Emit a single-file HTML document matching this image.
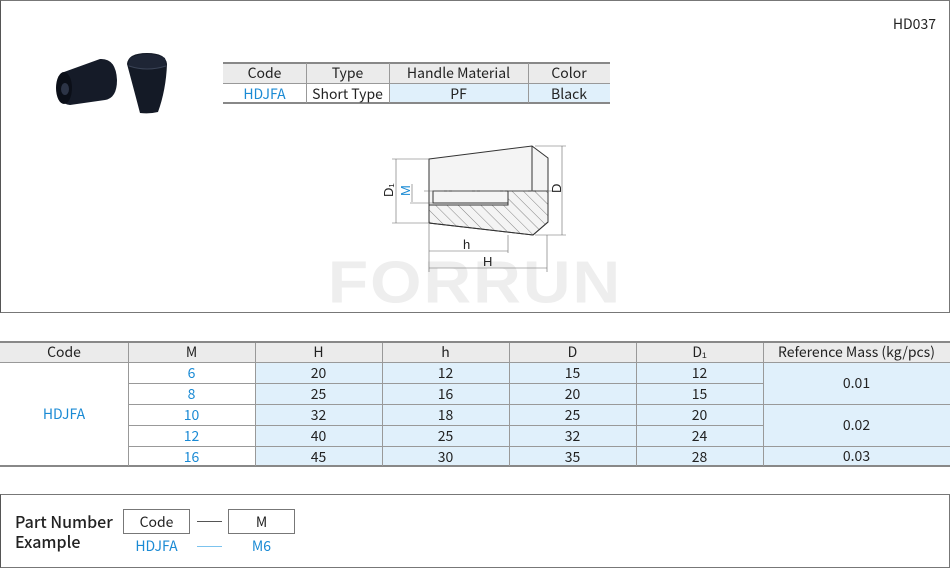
<!DOCTYPE html>
<html><head><meta charset="utf-8"><style>
*{margin:0;padding:0;box-sizing:border-box}
body{width:950px;height:570px;background:#fff;font-family:"Noto Sans CJK JP","Liberation Sans",sans-serif;color:#222;position:relative;overflow:hidden}
.box{position:absolute;border:1px solid #777}
.c{position:absolute;display:flex;align-items:center;justify-content:center;font-size:14px;line-height:1}
.b{color:#1a8ad4}
.hd{background:#ebebeb}
.bl{background:#e0f0fb}
</style></head><body>
<div class="box" style="left:0;top:0;width:950px;height:313px;border-left:1px solid #555"></div>
<div style="position:absolute;right:14px;top:14px;font-size:14px">HD037</div>
<!-- knobs -->
<svg style="position:absolute;left:50px;top:50px" width="130" height="70">
<path d="M14 22 L50 9 Q66 8 67 30 Q67 48 55 50 L20 55 Q8 54 8 38 Q8 26 14 22Z" fill="#151b28"/>
<ellipse cx="14" cy="38" rx="8" ry="16" fill="#0b0f18"/>
<ellipse cx="15" cy="39" rx="4" ry="6" fill="#2c3446"/>
<path d="M77 14 Q78 3 97 3 Q116 3 117 14 Q116 40 108 62 Q100 64 90 63 Q84 40 77 14Z" fill="#141a26"/>
<path d="M80 8 Q97 0 115 8 L116 16 Q97 22 78 16Z" fill="#1e2535"/>
<path d="M79 16 Q97 22 116 16" stroke="#3a4356" fill="none"/>
</svg>
<!-- small table -->
<div style="position:absolute;left:223px;top:62px;width:387px;height:42px;border-top:2px solid #888;border-bottom:2px solid #888"></div>
<div class="hd" style="position:absolute;left:223px;top:64px;width:387px;height:19px"></div>
<div class="bl" style="position:absolute;left:389px;top:84px;width:221px;height:18px"></div>
<div style="position:absolute;left:223px;top:83px;width:387px;border-top:1px solid #999"></div>
<div style="position:absolute;left:306px;top:63px;height:40px;border-left:1px solid #999"></div>
<div style="position:absolute;left:389px;top:63px;height:40px;border-left:1px solid #999"></div>
<div style="position:absolute;left:528px;top:63px;height:40px;border-left:1px solid #999"></div>
<div class="c" style="left:223px;top:63px;width:83px;height:20px">Code</div>
<div class="c" style="left:306px;top:63px;width:83px;height:20px">Type</div>
<div class="c" style="left:389px;top:63px;width:139px;height:20px">Handle Material</div>
<div class="c" style="left:528px;top:63px;width:82px;height:20px">Color</div>
<div class="c b" style="left:223px;top:84px;width:83px;height:19px">HDJFA</div>
<div class="c" style="left:306px;top:84px;width:83px;height:19px">Short Type</div>
<div class="c" style="left:389px;top:84px;width:139px;height:19px">PF</div>
<div class="c" style="left:528px;top:84px;width:82px;height:19px">Black</div>
<!-- watermark -->
<div style="position:absolute;left:318px;top:250px;width:314px;height:64px;font:bold 66px 'Liberation Sans',sans-serif;color:#eeeeee;letter-spacing:2px;line-height:64px;text-align:center;transform:scaleY(0.9)">FORRUN</div>
<!-- drawing -->
<svg style="position:absolute;left:370px;top:140px" width="220" height="140" font-family="Liberation Sans" font-size="13">
<defs><pattern id="h" width="8" height="8" patternUnits="userSpaceOnUse" patternTransform="rotate(-45)"><line x1="0" y1="0" x2="0" y2="8" stroke="#555" stroke-width="0.7"/></pattern></defs>
<path d="M59 19 L162 6 L178 18 L178 82 L163 95 L59 83 Z" fill="#f4f4f4" stroke="#333"/>
<path d="M59 65 L138 65 L138 51 L178 51 L178 82 L163 95 L59 83 Z" fill="url(#h)" stroke="#333"/>
<path d="M63 51 L138 51 L138 63 L63 63 Z" fill="#f4f4f4" stroke="#333"/>
<line x1="162" y1="6" x2="162" y2="51" stroke="#333"/>
<g stroke="#666" stroke-width="0.6" fill="none">
<line x1="22" y1="19" x2="59" y2="19"/><line x1="22" y1="83" x2="59" y2="83"/>
<line x1="26" y1="19" x2="26" y2="83"/>
<line x1="40" y1="63" x2="63" y2="63"/><line x1="42" y1="44" x2="42" y2="62"/>
<line x1="54" y1="51" x2="182" y2="51" stroke-dasharray="20 3 2 3"/>
<line x1="165" y1="6" x2="196" y2="6"/><line x1="165" y1="95" x2="196" y2="95"/>
<line x1="192" y1="6" x2="192" y2="95"/>
<line x1="59" y1="84" x2="59" y2="132"/><line x1="138" y1="95" x2="138" y2="113"/><line x1="177" y1="95" x2="177" y2="132"/>
<line x1="59" y1="111" x2="138" y2="111"/><line x1="59" y1="128" x2="177" y2="128"/>
</g>
<text x="93" y="109" fill="#222">h</text>
<text x="113" y="126" fill="#222">H</text>
<text x="23" y="57" transform="rotate(-90 23 57)" fill="#222">D₁</text>
<text x="40" y="56" transform="rotate(-90 40 56)" fill="#1a8ad4">M</text>
<text x="191" y="53" transform="rotate(-90 191 53)" fill="#222">D</text>
</svg>
<!-- main table -->
<div style="position:absolute;left:0;top:341px;width:950px;height:126px;border-top:2px solid #888;border-bottom:2px solid #888"></div>
<div class="hd" style="position:absolute;left:0;top:343px;width:950px;height:19px"></div>
<div class="bl" style="position:absolute;left:255px;top:362px;width:695px;height:103px"></div>
<div style="position:absolute;left:0;top:362px;width:950px;border-top:1px solid #999"></div>
<div style="position:absolute;left:128px;top:383px;width:636px;border-top:1px solid #999"></div>
<div style="position:absolute;left:128px;top:404px;width:822px;border-top:1px solid #999"></div>
<div style="position:absolute;left:128px;top:425px;width:636px;border-top:1px solid #999"></div>
<div style="position:absolute;left:128px;top:446px;width:822px;border-top:1px solid #999"></div>
<div style="position:absolute;left:128px;top:343px;height:123px;border-left:1px solid #999"></div>
<div style="position:absolute;left:255px;top:343px;height:123px;border-left:1px solid #999"></div>
<div style="position:absolute;left:382px;top:343px;height:123px;border-left:1px solid #999"></div>
<div style="position:absolute;left:509px;top:343px;height:123px;border-left:1px solid #999"></div>
<div style="position:absolute;left:636px;top:343px;height:123px;border-left:1px solid #999"></div>
<div style="position:absolute;left:763px;top:343px;height:123px;border-left:1px solid #999"></div>
<div class="c" style="left:0;top:342px;width:128px;height:20px">Code</div>
<div class="c" style="left:128px;top:342px;width:127px;height:20px">M</div>
<div class="c" style="left:255px;top:342px;width:127px;height:20px">H</div>
<div class="c" style="left:382px;top:342px;width:127px;height:20px">h</div>
<div class="c" style="left:509px;top:342px;width:127px;height:20px">D</div>
<div class="c" style="left:636px;top:342px;width:127px;height:20px">D₁</div>
<div class="c" style="left:763px;top:342px;width:187px;height:20px">Reference Mass (kg/pcs)</div>
<div class="c b" style="left:0;top:362px;width:128px;height:104px">HDJFA</div>
<div class="c" style="left:763px;top:362px;width:187px;height:42px">0.01</div>
<div class="c" style="left:763px;top:404px;width:187px;height:42px">0.02</div>
<div class="c" style="left:763px;top:446px;width:187px;height:20px">0.03</div>
<div class="c b" style="left:128px;top:363px;width:127px;height:20px">6</div><div class="c" style="left:255px;top:363px;width:127px;height:20px">20</div><div class="c" style="left:382px;top:363px;width:127px;height:20px">12</div><div class="c" style="left:509px;top:363px;width:127px;height:20px">15</div><div class="c" style="left:636px;top:363px;width:127px;height:20px">12</div>
<div class="c b" style="left:128px;top:384px;width:127px;height:20px">8</div><div class="c" style="left:255px;top:384px;width:127px;height:20px">25</div><div class="c" style="left:382px;top:384px;width:127px;height:20px">16</div><div class="c" style="left:509px;top:384px;width:127px;height:20px">20</div><div class="c" style="left:636px;top:384px;width:127px;height:20px">15</div>
<div class="c b" style="left:128px;top:405px;width:127px;height:20px">10</div><div class="c" style="left:255px;top:405px;width:127px;height:20px">32</div><div class="c" style="left:382px;top:405px;width:127px;height:20px">18</div><div class="c" style="left:509px;top:405px;width:127px;height:20px">25</div><div class="c" style="left:636px;top:405px;width:127px;height:20px">20</div>
<div class="c b" style="left:128px;top:426px;width:127px;height:20px">12</div><div class="c" style="left:255px;top:426px;width:127px;height:20px">40</div><div class="c" style="left:382px;top:426px;width:127px;height:20px">25</div><div class="c" style="left:509px;top:426px;width:127px;height:20px">32</div><div class="c" style="left:636px;top:426px;width:127px;height:20px">24</div>
<div class="c b" style="left:128px;top:447px;width:127px;height:19px">16</div><div class="c" style="left:255px;top:447px;width:127px;height:19px">45</div><div class="c" style="left:382px;top:447px;width:127px;height:19px">30</div><div class="c" style="left:509px;top:447px;width:127px;height:19px">35</div><div class="c" style="left:636px;top:447px;width:127px;height:19px">28</div>
<!-- part number -->
<div class="box" style="left:0;top:494px;width:950px;height:74px;border-left:1px solid #555"></div>
<div style="position:absolute;left:15px;top:511px;font-size:16px;line-height:20px;color:#222;font-weight:500">Part Number<br>Example</div>
<div class="c" style="left:123px;top:509px;width:67px;height:25px;border:1px solid #777">Code</div>
<div class="c" style="left:228px;top:509px;width:67px;height:25px;border:1px solid #777">M</div>
<div style="position:absolute;left:197px;top:521px;width:25px;border-top:1px solid #555"></div>
<div style="position:absolute;left:197px;top:546px;width:25px;border-top:1px solid #7cc3ee"></div>
<div class="c b" style="left:123px;top:537px;width:67px;height:18px">HDJFA</div>
<div class="c b" style="left:228px;top:537px;width:67px;height:18px">M6</div>
</body></html>
